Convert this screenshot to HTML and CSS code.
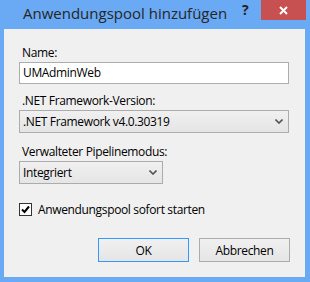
FILE: index.html
```html
<!DOCTYPE html>
<html lang="de">
<head>
  <meta charset="UTF-8">
  <meta name="viewport" content="width=device-width, initial-scale=1.0">
  <title>Anwendungspool hinzufügen</title>
  <link rel="stylesheet" href="styles.css">
</head>
<body>
  <div class="window">
    <div class="titlebar">
      <span class="title">Anwendungspool hinzufügen</span>
      <span class="help">?</span>
      <span class="close">
        <svg width="9" height="9" viewBox="0 0 9 9"><path d="M1 1 L8 8 M8 1 L1 8" stroke="#fff" stroke-width="2"/></svg>
      </span>
    </div>

    <div class="client">
      <label class="field-label">Name:</label>
      <div class="textbox">UMAdminWeb</div>

      <label class="field-label">.NET Framework-Version:</label>
      <div class="combo combo-wide">
        <span>.NET Framework v4.0.30319</span>
        <svg class="chevron" width="8" height="5" viewBox="0 0 8 5"><path d="M0.5 0.5 L4 4 L7.5 0.5" fill="none" stroke="#555" stroke-width="1.6"/></svg>
      </div>

      <label class="field-label">Verwalteter Pipelinemodus:</label>
      <div class="combo combo-small">
        <span>Integriert</span>
        <svg class="chevron" width="8" height="5" viewBox="0 0 8 5"><path d="M0.5 0.5 L4 4 L7.5 0.5" fill="none" stroke="#555" stroke-width="1.6"/></svg>
      </div>

      <div class="check-row">
        <span class="check-box">
          <svg width="11" height="11" viewBox="0 0 11 11"><path d="M2 5.5 L4.5 8 L9 2.5" fill="none" stroke="#000" stroke-width="2"/></svg>
        </span>
        <span>Anwendungspool sofort starten</span>
      </div>

      <div class="buttons">
        <button class="btn btn-default">OK</button>
        <button class="btn">Abbrechen</button>
      </div>
    </div>
  </div>
</body>
</html>
```

FILE: styles.css
```css
body {
  margin: 0;
  font-family: "Open Sans", "Noto Sans", sans-serif;
  font-size: 12px;
  letter-spacing: -0.35px;
  color: #000;
}
.window {
  width: 310px;
  height: 282px;
  box-sizing: border-box;
  background: #6aa9f3;
  padding: 0 5px 5px 4px;
  display: flex;
  flex-direction: column;
  position: relative;
}
.titlebar {
  height: 29px;
  display: flex;
  align-items: flex-start;
}
.title {
  margin: 3px 0 0 19px;
  font-size: 15px;
  line-height: 20px;
  letter-spacing: 0;
  color: #262626;
}
.help {
  position: absolute;
  top: 2px;
  left: 242px;
  font-size: 14px;
  font-weight: bold;
  line-height: 16px;
  color: #222;
}
.close {
  position: absolute;
  top: 0;
  right: 4px;
  width: 45px;
  height: 20px;
  background: #c75050;
  display: flex;
  align-items: center;
  justify-content: center;
}
.client {
  flex: 1;
  background: #f0f0f0;
  padding: 16px 15px 0 15px;
}
.field-label {
  display: block;
  height: 15px;
  line-height: 15px;
  padding-left: 3px;
  margin-bottom: 2px;
}
.textbox {
  width: 270px;
  height: 22px;
  box-sizing: border-box;
  border: 1px solid #abadb3;
  background: #fff;
  padding-left: 3px;
  line-height: 20px;
  margin-bottom: 9px;
}
.combo {
  height: 23px;
  box-sizing: border-box;
  border: 1px solid #acacac;
  background: linear-gradient(#f0f0f0, #e5e5e5);
  padding: 0 5px 0 3px;
  line-height: 21px;
  display: flex;
  align-items: center;
  justify-content: space-between;
}
.combo-wide {
  width: 270px;
  margin-bottom: 11px;
}
.combo-small {
  width: 144px;
  margin-bottom: 19px;
}
.check-row {
  display: flex;
  align-items: center;
  height: 13px;
  line-height: 13px;
  gap: 6px;
  margin-bottom: 22px;
}
.check-box {
  width: 13px;
  height: 13px;
  box-sizing: border-box;
  border: 1px solid #333;
  background: #fff;
  display: flex;
  align-items: center;
  justify-content: center;
}
.buttons {
  display: flex;
  justify-content: flex-end;
  gap: 10px;
}
.btn {
  width: 91px;
  height: 24px;
  border: 1px solid #acacac;
  background: linear-gradient(#f0f0f0, #e5e5e5);
  font-family: inherit;
  font-size: 12px;
  letter-spacing: inherit;
  color: #000;
  padding: 0;
}
.btn-default {
  border-color: #3399ff;
}
```
